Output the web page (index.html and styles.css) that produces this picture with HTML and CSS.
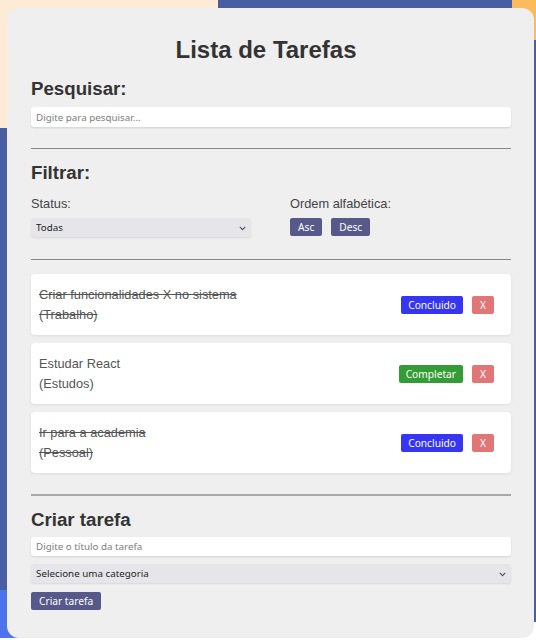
FILE: index.html
```html
<!DOCTYPE html>
<html lang="pt-BR">
<head>
<meta charset="utf-8">
<title>Lista de Tarefas</title>
<link rel="stylesheet" href="styles.css">
</head>
<body>
<main class="card">
  <h1 class="title">Lista de Tarefas</h1>

  <section class="search">
    <h3 class="section-title">Pesquisar:</h3>
    <input class="field field-search" type="text" placeholder="Digite para pesquisar...">
  </section>

  <hr class="rule rule-search">

  <section class="filter">
    <h3 class="section-title section-filter">Filtrar:</h3>
    <div class="filter-grid">
      <div class="filter-col">
        <span class="label">Status:</span>
        <div class="select-wrap select-status">
          <select class="select"><option>Todas</option></select>
          <svg class="chevron" width="7" height="5" viewBox="0 0 7 5"><path d="M0.8 0.9 L3.5 3.6 L6.2 0.9" fill="none" stroke="#555" stroke-width="1.2"/></svg>
        </div>
      </div>
      <div class="filter-col">
        <span class="label">Ordem alfabética:</span>
        <div class="sort-buttons">
          <button class="btn btn-slate">Asc</button>
          <button class="btn btn-slate">Desc</button>
        </div>
      </div>
    </div>
  </section>

  <hr class="rule rule-filter">

  <ul class="tasks">
    <li class="task">
      <div class="task-text done">
        <span class="task-name">Criar funcionalidades X no sistema</span>
        <span class="task-cat">(Trabalho)</span>
      </div>
      <div class="task-actions">
        <button class="btn btn-blue">Concluido</button>
        <button class="btn btn-red">X</button>
      </div>
    </li>
    <li class="task">
      <div class="task-text">
        <span class="task-name">Estudar React</span>
        <span class="task-cat">(Estudos)</span>
      </div>
      <div class="task-actions">
        <button class="btn btn-green">Completar</button>
        <button class="btn btn-red">X</button>
      </div>
    </li>
    <li class="task">
      <div class="task-text done">
        <span class="task-name">Ir para a academia</span>
        <span class="task-cat">(Pessoal)</span>
      </div>
      <div class="task-actions">
        <button class="btn btn-blue">Concluido</button>
        <button class="btn btn-red">X</button>
      </div>
    </li>
  </ul>

  <hr class="rule rule-thick">

  <section class="create">
    <h3 class="section-title section-create">Criar tarefa</h3>
    <input class="field field-title" type="text" placeholder="Digite o título da tarefa">
    <div class="select-wrap select-cat">
      <select class="select"><option>Selecione uma categoria</option></select>
      <svg class="chevron" width="7" height="5" viewBox="0 0 7 5"><path d="M0.8 0.9 L3.5 3.6 L6.2 0.9" fill="none" stroke="#555" stroke-width="1.2"/></svg>
    </div>
    <button class="btn btn-slate btn-create">Criar tarefa</button>
  </section>
</main>
</body>
</html>
```

FILE: styles.css
```css
* { box-sizing: border-box; }

html, body {
  margin: 0;
  height: 640px;
  overflow: hidden;
}

body {
  font-family: "Liberation Sans", Arial, sans-serif;
  color: #333;
  background-color: #ffffff;
  background-image:
    linear-gradient(#485ea3, #485ea3),
    linear-gradient(#fdbb5c, #fdbb5c),
    linear-gradient(#485ea3, #485ea3),
    linear-gradient(#fdebd5, #fdebd5),
    linear-gradient(#485ea3, #485ea3),
    linear-gradient(#4d72ee, #4d72ee);
  background-size:
    294px 30px,
    30px 40px,
    20px 592px,
    218px 128px,
    20px 462px,
    20px 48px;
  background-position:
    218px 0,
    506px 0,
    516px 30px,
    0 0,
    0 128px,
    0 590px;
  background-repeat: no-repeat;
  padding-top: 8px;
}

.card {
  margin: 0 0 0 7px;
  width: 527px;
  height: 630px;
  background: #efefef;
  border-radius: 12px;
  padding: 24px 23px 0 24px;
}

.title {
  margin: 4px 10px 0 0;
  font-size: 24px;
  line-height: 28px;
  font-weight: bold;
  text-align: center;
  color: #333;
}

.section-title {
  margin: 14px 0 0;
  font-size: 18.7px;
  line-height: 22px;
  font-weight: bold;
  color: #333;
}

.section-filter { margin-top: 13px; }
.section-create { margin-top: 13px; }

.field {
  display: block;
  width: 100%;
  height: 20px;
  border: none;
  border-radius: 3px;
  background: #fff;
  box-shadow: 0 1px 2px rgba(0, 0, 0, 0.12);
  padding: 0 5px;
  font-family: "Noto Sans", "Open Sans", sans-serif;
  font-size: 9.8px;
  color: #333;
  outline: none;
}

.field::placeholder { color: #7d7d7d; }

.field-search { margin-top: 7px; }
.field-title { margin-top: 6px; height: 19px; }

.rule {
  border: none;
  height: 1px;
  background: #858585;
  margin: 0;
}

.rule-search { margin-top: 21px; }
.rule-filter { margin-top: 22px; }
.rule-thick {
  margin-top: 21px;
  height: 2px;
  background: #a9a9a9;
}

.filter-grid {
  display: grid;
  grid-template-columns: 220px 1fr;
  column-gap: 39px;
  margin-top: 12px;
}

.filter-col {
  display: flex;
  flex-direction: column;
  align-items: flex-start;
}

.label {
  font-size: 12.8px;
  line-height: 16px;
  color: #444;
}

.select-wrap {
  position: relative;
}

.select {
  display: block;
  width: 100%;
  height: 19px;
  border: none;
  border-radius: 3px;
  background-color: #e6e6ea;
  box-shadow: 0 1px 2px rgba(0, 0, 0, 0.1);
  padding: 0 5px;
  font-family: "Noto Sans", "Open Sans", sans-serif;
  font-size: 9.8px;
  font-weight: 400;
  color: #1e1e1e;
  outline: none;
  -webkit-appearance: none;
  appearance: none;
}

.chevron {
  position: absolute;
  right: 5px;
  top: 8px;
  pointer-events: none;
}

.select-status {
  width: 220px;
  margin-top: 6px;
}

.select-cat {
  width: 100%;
  margin-top: 8px;
}

.sort-buttons {
  display: flex;
  gap: 9px;
  margin-top: 6px;
}

.btn {
  height: 18px;
  border: none;
  border-radius: 2px;
  padding: 0 7px;
  font-family: "Noto Sans", "Open Sans", sans-serif;
  font-size: 10.2px;
  line-height: 18px;
  color: #fff;
  cursor: pointer;
}

.btn-slate { background: #57598a; padding: 0 8px; }
.btn-blue { background: #3535f3; }
.btn-green { background: #349c34; }
.btn-red { background: #e07676; width: 22px; padding: 0; }

.btn-create {
  display: block;
  margin-top: 9px;
  padding: 0 8px;
}

.tasks {
  list-style: none;
  margin: 14px 0 0;
  padding: 0;
  display: flex;
  flex-direction: column;
  gap: 8px;
}

.task {
  height: 61px;
  background: #fff;
  border-radius: 4px;
  box-shadow: 0 1px 3px rgba(0, 0, 0, 0.08);
  padding: 11px 17px 11px 8px;
  display: flex;
  align-items: center;
  justify-content: space-between;
}

.task-text {
  display: flex;
  flex-direction: column;
  align-self: flex-start;
  font-size: 12.8px;
  line-height: 20px;
  color: #555;
}

.task-text.done { text-decoration: line-through; }

.task-actions {
  display: flex;
  gap: 9px;
}
```
